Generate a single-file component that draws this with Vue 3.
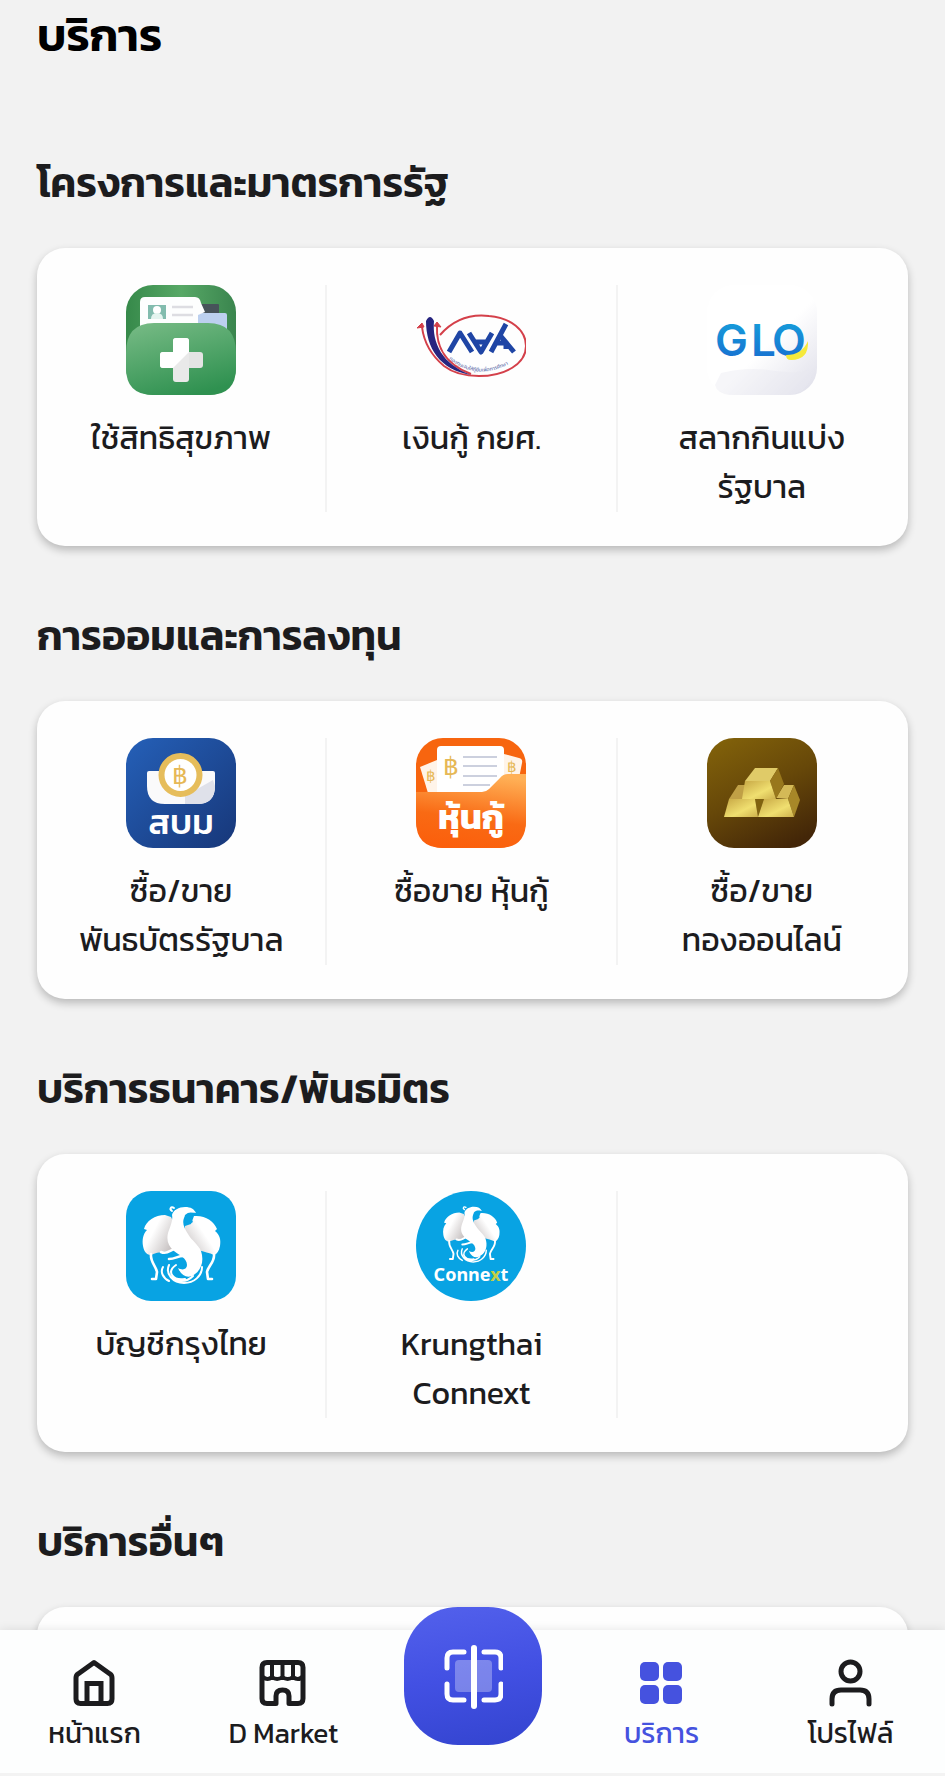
<script setup>
import { ref } from 'vue'

const sections = [
  {
    title: 'โครงการและมาตรการรัฐ',
    items: [
      { icon: 'health', label: 'ใช้สิทธิสุขภาพ' },
      { icon: 'loan', label: 'เงินกู้ กยศ.' },
      { icon: 'glo', label: 'สลากกินแบ่ง\nรัฐบาล' },
    ],
  },
  {
    title: 'การออมและการลงทุน',
    items: [
      { icon: 'bond', label: 'ซื้อ/ขาย\nพันธบัตรรัฐบาล' },
      { icon: 'debenture', label: 'ซื้อขาย หุ้นกู้' },
      { icon: 'gold', label: 'ซื้อ/ขาย\nทองออนไลน์' },
    ],
  },
  {
    title: 'บริการธนาคาร/พันธมิตร',
    items: [
      { icon: 'krungthai', label: 'บัญชีกรุงไทย' },
      { icon: 'connext', label: 'Krungthai\nConnext' },
    ],
  },
  { title: 'บริการอื่นๆ', items: [] },
]

const tabs = [
  { id: 'home', label: 'หน้าแรก' },
  { id: 'market', label: 'D Market' },
  { id: 'scan', label: '' },
  { id: 'services', label: 'บริการ' },
  { id: 'profile', label: 'โปรไฟล์' },
]

const activeTab = ref('services')
</script>

<template>
  <div class="app">
    <!-- shared symbols and gradients -->
    <svg class="defs" width="0" height="0" aria-hidden="true">
      <defs>
        <linearGradient id="greenBack" x1="0" y1="0" x2="1" y2="0">
          <stop offset="0" stop-color="#36894a" /><stop offset=".5" stop-color="#57a866" /><stop offset="1" stop-color="#3a854e" />
        </linearGradient>
        <linearGradient id="greenFront" x1=".2" y1="0" x2=".6" y2="1">
          <stop offset="0" stop-color="#74b983" /><stop offset="1" stop-color="#2f9150" />
        </linearGradient>
        <linearGradient id="gloBg" x1=".3" y1=".3" x2="1" y2="1">
          <stop offset=".35" stop-color="#fff" /><stop offset="1" stop-color="#dedee9" />
        </linearGradient>
        <linearGradient id="gloText" x1="0" y1="0" x2="0" y2="1">
          <stop offset="0" stop-color="#16a6dc" /><stop offset="1" stop-color="#1768cf" />
        </linearGradient>
        <linearGradient id="blueBg" x1="0" y1="0" x2="1" y2="1">
          <stop offset="0" stop-color="#2560b8" /><stop offset="1" stop-color="#173779" />
        </linearGradient>
        <linearGradient id="orangeFront" x1=".6" y1="0" x2=".4" y2="1">
          <stop offset="0" stop-color="#ffb056" /><stop offset=".6" stop-color="#f96a14" /><stop offset="1" stop-color="#fb5f0c" />
        </linearGradient>
        <linearGradient id="goldBg" x1=".2" y1="0" x2=".7" y2="1">
          <stop offset="0" stop-color="#80600a" /><stop offset=".5" stop-color="#664709" /><stop offset="1" stop-color="#432608" />
        </linearGradient>
        <linearGradient id="goldFront" x1="0" y1="0" x2="1" y2="1">
          <stop offset="0" stop-color="#c6a644" /><stop offset=".6" stop-color="#f0df70" /><stop offset="1" stop-color="#cdb04c" />
        </linearGradient>
        <linearGradient id="wingL" x1="0" y1="0" x2="1" y2=".6">
          <stop offset=".4" stop-color="#fff" /><stop offset="1" stop-color="#c2bcbc" />
        </linearGradient>
        <linearGradient id="wingR" x1="1" y1="0" x2="0" y2=".7">
          <stop offset=".5" stop-color="#fff" /><stop offset="1" stop-color="#c9c4c4" />
        </linearGradient>
        <symbol id="bird" viewBox="0 0 110 110">
          <path fill="url(#wingL)" d="M39 24c-10 0-19 6-21 14l3 1c-4 4-5 10-4 16 1 6 4 9 8 9 8-4 18-3 27-6l-2-22-5-10z" />
          <path fill="url(#wingR)" d="M68 25c11-1 20 5 23 13l-2 2c5 4 6 9 5 15-1 5-3 8-6 9-9-4-22-5-31-12l2-17 6-2z" />
          <path fill="#fff" d="M46 24c1-5 7-8 13-8 6 0 9 2 11 6-5-1-10 1-12 5-2 5 0 10 4 16 4 7 10 10 13 17 3 9 1 18-6 23-6 5-13 3-17-6 5 3 9 1 9-3 0-7-8-10-13-14-7-6-8-13-5-21 2-6 4-10 3-15z" />
          <g fill="none" stroke="#fff" stroke-linecap="round" stroke-linejoin="round">
            <path stroke-width="2.600" d="M25 63c-1 8 5 12 6 18l-1 7h-4M88 63c1 8-6 12-7 18l1 7h4" />
            <path stroke-width="2.600" d="M35 61c6 3 9-2 14-3M43 68c6 0 9-3 14-3" />
            <path stroke-width="2" d="M37 76c-3 5 0 11 6 14M43 74c-4 9 4 18 15 18 10 0 18-7 18-16M50 74c-10 7-3 16 9 14M45 86c6 5 15 6 22-1" />
            <path stroke-width="2" d="M48 17c-3-2-5 1-2 3" />
          </g>
          <path fill="#08a3e3" d="M59 24c3-3 6-3 9-2-3 2-3 6-1 9-5 4-10-2-8-7z" />
        </symbol>
      </defs>
    </svg>

    <main class="content">
      <h1 class="page-title">บริการ</h1>

      <section v-for="section in sections" :key="section.title">
        <h2 class="section-title">{{ section.title }}</h2>
        <div class="card">
          <div v-for="n in 3" :key="n" class="cell">
            <a v-if="section.items[n - 1]" class="service" href="#" @click.prevent>
              <svg class="service-icon" viewBox="0 0 110 110" aria-hidden="true">
                <g v-if="section.items[n - 1].icon === 'health'">
                  <rect width="110" height="110" rx="27" fill="url(#greenBack)" />
                  <rect x="73" y="19" width="20" height="12" rx="1" fill="#47535a" />
                  <path d="M70 30l5-2h24q2 0 2 2v20H70z" fill="#bcd0ef" />
                  <path d="M14 17q0-5 5-5h50q5 0 6 6l4 9-7 3v20H14z" fill="#fdfefe" />
                  <rect x="22" y="20" width="18" height="14" fill="#82bcae" />
                  <circle cx="31" cy="25" r="4" fill="#fff" />
                  <path d="M25 34q0-6 6-6t6 6z" fill="#e4f4ef" />
                  <path d="M46 22h21M46 30h21" stroke="#dddde2" stroke-width="2.500" />
                  <path d="M0 68Q0 38 28 38h54q28 0 28 30v15q0 27-27 27H27Q0 110 0 83z" fill="url(#greenFront)" />
                  <rect x="34" y="67" width="43" height="16" rx="3" fill="#e4e4e4" />
                  <rect x="47" y="53" width="16" height="44" rx="3" fill="#e9e9e9" />
                  <path d="M50 53h10q3 0 3 3v11L47 83H37q-3 0-3-3V70q0-3 3-3h10V56q0-3 3-3z" fill="#fff" />
                </g>

                <g v-else-if="section.items[n - 1].icon === 'loan'" fill="none">
                  <path d="M24 50C38 34 56 29 73 31c22 2 37 14 37 30 0 18-21 30-47 30-15 0-26-3-35-10C16 71 8 58 6 42" stroke="#d4404a" stroke-width="2" />
                  <path d="M21 40c-1 19 5 38 34 49" stroke="#d4404a" stroke-width="2" />
                  <path d="M1 43l5-5 2 4zM18 41l3-4 4 5z" fill="#d4404a" stroke="#d4404a" />
                  <path d="M10 36q4-8 8 0c-2 22 8 43 37 54C24 85 10 63 10 36z" fill="#26247f" />
                  <g stroke="#1f45a5" stroke-width="5" stroke-linejoin="round">
                    <path d="M33 67l11-19 12 19M53 48l12 19 11-19M58 57h13M75 67l15-28M83 49l15 18M79 58h11v6" />
                  </g>
                  <path id="loanArc" d="M33 74q31 25 68 0" />
                  <text class="loan-text"><textPath href="#loanArc">กองทุนเงินให้กู้ยืมเพื่อการศึกษา</textPath></text>
                </g>

                <g v-else-if="section.items[n - 1].icon === 'glo'">
                  <rect width="110" height="110" rx="27" fill="url(#gloBg)" />
                  <path d="M14 88q28-7 54-2 22 3 38-2-3 26-28 26H22Q10 108 8 100z" fill="#e9e9f1" opacity=".4" />
                  <text class="glo-text" x="8 44 65" y="71" fill="url(#gloText)">GLO</text>
                  <path d="M79 70q16 0 22-14 1 19-17 19-5 0-5-5z" fill="#f5e93b" />
                </g>

                <g v-else-if="section.items[n - 1].icon === 'bond'">
                  <rect width="110" height="110" rx="27" fill="url(#blueBg)" />
                  <path d="M21 35q0-2 2-2h64q2 0 2 2v13q0 18-18 18H39q-18 0-18-18z" fill="#fafafb" />
                  <path d="M59 66V58l28-16 2 6q0 18-18 18z" fill="#dfe1ea" />
                  <circle cx="54.500" cy="37" r="19" fill="#fff" stroke="#e6bd5b" stroke-width="6" />
                  <text class="baht" x="54" y="46" font-size="25">฿</text>
                  <text class="icon-text" x="55" y="96" font-size="35">สบม</text>
                </g>

                <g v-else-if="section.items[n - 1].icon === 'debenture'">
                  <rect width="110" height="110" rx="27" fill="#f7650f" />
                  <path d="M4 29l17-7v33h-9z" fill="#fff4e9" />
                  <path d="M88 16l15 4q4 1 3 5l-4 20H88z" fill="#fff4e9" />
                  <text class="baht" x="15" y="43" font-size="15">฿</text>
                  <text class="baht" x="96" y="34" font-size="15">฿</text>
                  <path d="M21 12q0-4 4-4h59q4 0 4 4v43H21z" fill="#fff" />
                  <path d="M47 19h34M47 28h34M47 38h34M47 47h27" stroke="#ccd0de" stroke-width="2" />
                  <text class="baht" x="35" y="37" font-size="25">฿</text>
                  <path d="M0 54h66q4 0 7-3l11-11q3-4 8-4h18v47q0 27-27 27H27Q0 110 0 83z" fill="url(#orangeFront)" />
                  <text class="icon-text bold" x="55" y="91" font-size="35">หุ้นกู้</text>
                </g>

                <g v-else-if="section.items[n - 1].icon === 'gold'">
                  <rect width="110" height="110" rx="27" fill="url(#goldBg)" />
                  <path d="M22 61l9-14h8l9 14z" fill="#c0a046" />
                  <path d="M48 61h9l-6 18z" fill="#80620f" />
                  <path d="M69 60l8-13h10l-6 14z" fill="#d4b957" />
                  <path d="M87 47l6 15-6 17-6-18z" fill="#a78728" />
                  <path d="M22 61h26l3 18H17z" fill="url(#goldFront)" />
                  <path d="M57 61h24l6 18H51z" fill="url(#goldFront)" />
                  <path d="M48 30h23l-8 13H38z" fill="#e0cb68" />
                  <path d="M71 30l6 16-8 15-6-18z" fill="#98771c" />
                  <path d="M38 43h25l6 18H35z" fill="url(#goldFront)" />
                </g>

                <g v-else-if="section.items[n - 1].icon === 'krungthai'">
                  <rect width="110" height="110" rx="25" fill="#08a3e3" />
                  <use href="#bird" width="110" height="110" />
                </g>

                <g v-else>
                  <circle cx="55" cy="55" r="55" fill="#08a3e3" />
                  <use href="#bird" x="15" y="4" width="80" height="80" />
                  <text class="connext-text" x="55" y="90">Conne<tspan fill="#c5cf45">x</tspan>t</text>
                </g>
              </svg>
              <span class="service-label">{{ section.items[n - 1].label }}</span>
            </a>
          </div>
        </div>
      </section>
    </main>

    <nav class="tabbar">
      <div v-for="tab in tabs" :key="tab.id" class="tab-slot">
        <button v-if="tab.id === 'scan'" class="scan" type="button" aria-label="Scan">
          <svg class="scan-icon" viewBox="0 0 60 66" aria-hidden="true">
            <rect x="12" y="17" width="37" height="32" rx="4" fill="#fff" opacity=".3" />
            <g fill="none" stroke="#fff" stroke-width="5" stroke-linecap="round">
              <path d="M21 9H10q-6 0-6 6v10M41 9h11q6 0 6 6v10M4 41v10q0 6 6 6h11M58 41v10q0 6-6 6H41" />
              <path stroke-width="6" d="M31 5v58" />
            </g>
          </svg>
        </button>
        <button v-else class="tab" :class="{ active: activeTab === tab.id }" type="button" @click="activeTab = tab.id">
          <svg class="tab-icon" viewBox="0 0 48 48" aria-hidden="true">
            <g fill="none" stroke="currentColor" stroke-width="5" stroke-linecap="round" stroke-linejoin="round">
              <template v-if="tab.id === 'home'">
                <path d="M23 3.500L39 15q2 1 2 4v21q0 4.500-4.500 4.500h-27Q5 44.500 5 40V19q0-3 2-4z" />
                <path stroke-linejoin="miter" d="M16 44V24.500h14V44" />
              </template>
              <template v-else-if="tab.id === 'market'">
                <path d="M17 44.500H8Q3 44.500 3 39.500v-31Q3 3.500 8 3.500h31q5 0 5 5v31q0 5-5 5h-9V37q0-6-6.500-6T17 37z" />
                <path stroke-width="4" d="M13 4v14M23.500 4v14M34 4v14M4 18q4.500 4 9 0 5 4 10.500 0 5 4 10.500 0 5 4 9 0" />
              </template>
              <template v-else-if="tab.id === 'profile'">
                <circle cx="23.500" cy="12.500" r="9.500" />
                <path d="M5 45v-5q0-9 9-9h19q9 0 9 9v5" />
              </template>
            </g>
            <g v-if="tab.id === 'services'" fill="currentColor">
              <rect x="3" y="3" width="19" height="19" rx="5" />
              <rect x="26" y="3" width="19" height="19" rx="5" />
              <rect x="3" y="26" width="19" height="19" rx="5" />
              <rect x="26" y="26" width="19" height="19" rx="5" />
            </g>
          </svg>
          <span class="tab-label">{{ tab.label }}</span>
        </button>
      </div>
    </nav>
  </div>
</template>

<style>
body {
  background: #f2f2f2;
}
</style>

<style scoped>
.app {
  display: flex;
  flex-direction: column;
  height: 100vh;
  overflow: hidden;
  background: #f2f2f2;
  color: #1c1c1e;
  font-family: Kanit, "Noto Sans Thai", "Noto Sans", sans-serif;
}

.defs { display: block; flex: none; }

.content {
  flex: 1;
  min-height: 0;
  overflow-y: auto;
  scrollbar-width: none;
  padding: 0 37px;
}

.page-title {
  margin: 0;
  padding: 0 0 23px;
  font-size: 46px;
  line-height: 70px;
  font-weight: 600;
  color: #000;
}

.section-title {
  margin: 0;
  padding: 60px 0 35px;
  font-size: 41px;
  line-height: 60px;
  font-weight: 600;
}

.card {
  display: grid;
  grid-template-columns: repeat(3, 1fr);
  padding: 37px 0 34px;
  border-radius: 28px;
  background: #fefefe;
  box-shadow: 0 4px 8px rgba(0, 0, 0, 0.24);
}

.cell {
  min-height: 227px;
  border-right: 2px solid #f3f3f3;
}
.cell:last-child { border-color: transparent; }

.service {
  display: flex;
  flex-direction: column;
  align-items: center;
  gap: 19px;
  color: inherit;
  text-decoration: none;
}

.service-icon { width: 110px; height: 110px; }

.service-label {
  font-size: 32px;
  line-height: 49px;
  text-align: center;
  white-space: pre-line;
}

.icon-text { fill: #fff; font-weight: 500; text-anchor: middle; }
.icon-text.bold { font-weight: 700; }
.baht { fill: #e6b855; font-family: Roboto, sans-serif; text-anchor: middle; }
.loan-text { fill: #5a6aa8; font-size: 5px; }
.glo-text { font-family: Inter, sans-serif; font-size: 44px; font-weight: 600; }
.connext-text {
  fill: #fff;
  font-family: "Noto Sans", sans-serif;
  font-size: 18px;
  font-weight: 700;
  text-anchor: middle;
}

/* bottom tabs */
.tabbar {
  position: relative;
  display: grid;
  grid-template-columns: repeat(5, 1fr);
  flex: none;
  height: 143px;
  border-bottom: 3px solid #f3f3f3;
  background: #fdfefe;
  box-shadow: 0 0 10px rgba(0, 0, 0, 0.1);
}

.tab-slot { display: flex; justify-content: center; align-items: flex-start; }

.tab {
  display: flex;
  flex-direction: column;
  align-items: center;
  gap: 8px;
  padding: 29px 0 0;
  border: 0;
  background: none;
  color: #1c1c1e;
  font: inherit;
  cursor: pointer;
}
.tab.active { color: #4552df; }

.tab-icon { width: 48px; height: 48px; }

.tab-label { font-size: 28px; line-height: 36px; white-space: nowrap; }

.scan {
  display: flex;
  align-items: center;
  justify-content: center;
  width: 138px;
  height: 138px;
  margin-top: -23px;
  padding: 0;
  border: 0;
  border-radius: 54px;
  background: linear-gradient(170deg, #5361ec, #4250e3 50%, #3344cf);
  cursor: pointer;
}

.scan-icon { width: 60px; height: 66px; }
</style>
